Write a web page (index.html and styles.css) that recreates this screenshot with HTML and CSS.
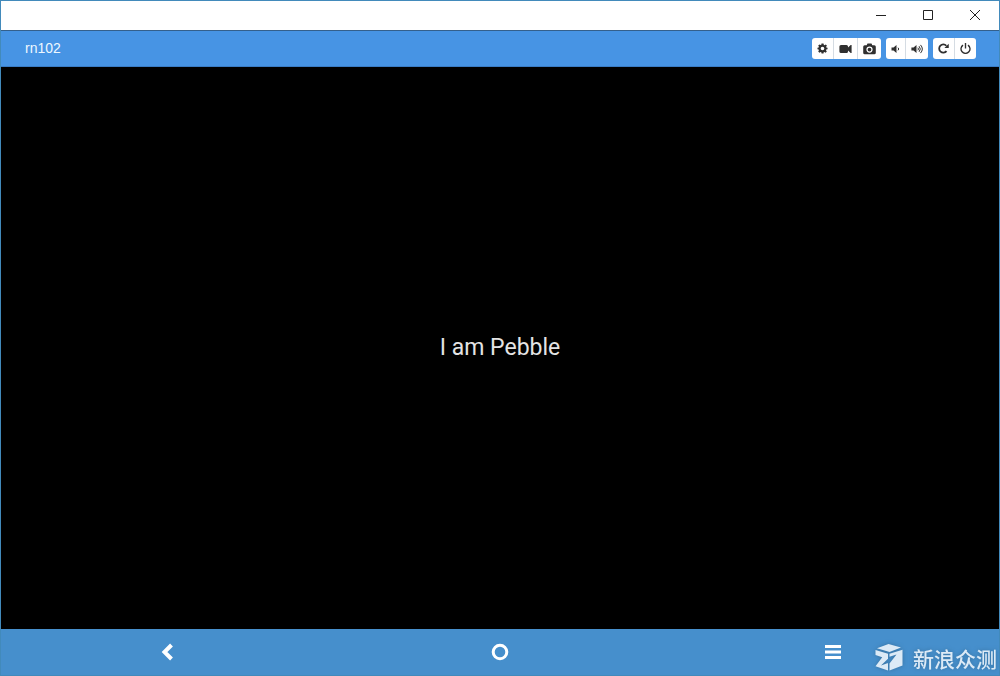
FILE: index.html
```html
<!DOCTYPE html>
<html lang="en">
<head>
<meta charset="utf-8">
<meta name="viewport" content="width=device-width, initial-scale=1">
<title>rn102</title>
<link rel="stylesheet" href="styles.css">
</head>
<body>
<div class="window">
  <header class="titlebar">
    <button class="caption" aria-label="Minimize"><svg width="12" height="12" viewBox="0 0 12 12"><path d="M1 6.500H11" /></svg></button>
    <button class="caption" aria-label="Maximize"><svg width="12" height="12" viewBox="0 0 12 12"><path d="M1.500 1.500H10.500V10.500H1.500Z" /></svg></button>
    <button class="caption" aria-label="Close"><svg width="12" height="12" viewBox="0 0 12 12"><path d="M1 1L11 11M11 1L1 11" /></svg></button>
  </header>
  <div class="toolbar">
    <h1 class="device">rn102</h1>
    <div class="tools">
      <div class="group">
        <button class="tool" aria-label="Settings"><svg width="11" height="11" viewBox="0 0 12 12"><path fill-rule="evenodd" d="M4.900 .5H7.100L7.400 2L8.300 2.400L9.600 1.500L10.900 2.900L9.900 4.100L10.200 5L11.500 5.200V6.900L10.100 7.200L9.800 8L10.700 9.300L9.400 10.600L8.100 9.800L7.300 10.100L7.100 11.500H5L4.700 10.100L3.900 9.800L2.700 10.600L1.300 9.300L2.100 8L1.800 7.200L.5 6.900V5.100L1.800 4.900L2.100 4L1.300 2.800L2.700 1.500L3.900 2.300L4.700 2ZM6 4A2 2 0 1 0 6 8A2 2 0 1 0 6 4Z"/></svg></button>
        <button class="tool" aria-label="Record video"><svg width="13" height="12" viewBox="0 0 13 12"><path d="M2 2H7.500Q9 2 9 3.500V4.600L11.700 2H12.600V10H11.700L9 7.400V8.500Q9 10 7.500 10H2Q.4 10 .4 8.500V3.500Q.4 2 2 2Z"/></svg></button>
        <button class="tool" aria-label="Take screenshot"><svg width="13" height="12" viewBox="0 0 13 12"><path fill-rule="evenodd" d="M4.500 .6H8.500L9.300 2.200H11.300Q12.800 2.200 12.800 3.700V9.700Q12.800 11.200 11.300 11.200H1.700Q.2 11.200 .2 9.700V3.700Q.2 2.200 1.700 2.200H3.700ZM6.500 3.500A3.100 3.100 0 1 0 6.500 9.700A3.100 3.100 0 1 0 6.500 3.500ZM6.500 4.700A1.900 1.900 0 1 1 6.500 8.500A1.900 1.900 0 1 1 6.500 4.700Z"/></svg></button>
      </div>
      <div class="group">
        <button class="tool" aria-label="Volume down"><svg width="9" height="12" viewBox="0 0 9 12"><path d="M.5 4.500H2.500L5.500 2V10L2.500 7.500H.5Z"/><path class="stroke thin" d="M7 4.700Q8.500 6 7 7.300"/></svg></button>
        <button class="tool" aria-label="Volume up"><svg width="12" height="12" viewBox="0 0 12 12"><path d="M.4 4.500H2.500L5.500 2V10L2.500 7.500H.4Z"/><path class="stroke thin" d="M6.900 4.700Q8 6 6.900 7.300M8.100 3.200Q10.500 6 8.100 8.800M9.500 1.900Q13.200 6 9.500 10.100"/></svg></button>
      </div>
      <div class="group">
        <button class="tool" aria-label="Rotate"><svg width="11" height="11" viewBox="0 0 12 12"><path class="stroke" d="M9.300 8.900A4.500 4.500 0 1 1 9.100 3"/><path d="M11.700 .7V5.400H7Z"/></svg></button>
        <button class="tool" aria-label="Power"><svg width="11" height="11" viewBox="0 0 12 12"><path class="stroke power" d="M3.300 2.300A4.900 4.900 0 1 0 8.700 2.300M6 0V6"/></svg></button>
      </div>
    </div>
  </div>
  <main class="screen"><p class="message">I am Pebble</p></main>
  <nav class="navbar" aria-label="Device navigation">
    <button class="nav" aria-label="Back"><svg width="18" height="18" viewBox="0 0 18 18"><path d="M13.500 2L6.500 9L13.500 16"/></svg></button>
    <button class="nav" aria-label="Home"><svg width="18" height="18" viewBox="0 0 18 18"><circle class="ring" cx="9" cy="9" r="6.800"/></svg></button>
    <button class="nav" aria-label="Menu"><svg width="18" height="18" viewBox="0 0 18 18"><path class="bars" d="M1 3.500H17M1 9H17M1 14.500H17"/></svg></button>
  </nav>
  <div class="watermark">
    <svg width="30" height="30" viewBox="0 0 30 30"><path fill-rule="evenodd" d="M3 5.200L14.500 1L27 4.600L15.500 9ZM1.500 7L14 10.800V27.500L1.500 23.300L8.200 14.200L1.500 12ZM15.500 10.800L28.500 6.800V22.500L15.500 27.500V20.500L22.500 11.500L15.500 13.700ZM14 15.800L7 22.500L14 20Z"/></svg>
    <span lang="zh-CN">新浪众测</span>
  </div>
</div>
</body>
</html>
```
FILE: styles.css
```css
* { box-sizing: border-box; }
body { margin: 0; font-family: "Liberation Sans", Arial, sans-serif; }
button { margin: 0; padding: 0; border: 0; background: none; display: flex; align-items: center; justify-content: center; }
svg { display: block; }
.window { position: relative; display: flex; flex-direction: column; min-height: 100vh; border: 1px solid #428abb; background: #000; }
.titlebar { display: flex; justify-content: flex-end; height: 29px; padding-right: 1px; background: #fff; }
.caption { width: 47px; height: 28px; }
.caption path { fill: none; stroke: #222; stroke-width: 1; }
.toolbar { display: flex; align-items: center; justify-content: space-between; height: 37px; padding: 0 23px 0 24px; border-top: 1px solid #34608c; border-bottom: 1px solid #397cc5; background: #4794e4; }
.device { margin: 0; padding-bottom: 2px; font-size: 14px; font-weight: 400; line-height: 20px; color: #eef8ff; }
.tools { display: flex; gap: 5px; }
.group { display: flex; overflow: hidden; border-radius: 3px; background: #fff; }
.tool { height: 21px; padding: 0 5px; }
.tool + .tool { border-left: 1px solid #d5dce3; }
.tool path { fill: #303030; }
.tool .stroke { fill: none; stroke: #303030; stroke-width: 2; }
.tool .thin { stroke-width: 1; }
.screen { flex: 1; display: flex; align-items: center; justify-content: center; background: #000; }
.message { margin: 0; font-family: Roboto, sans-serif; font-size: 23px; line-height: 32px; color: #e4e4e4; }
.navbar { display: grid; grid-template-columns: repeat(3, 1fr); height: 46px; background: #468fcc; }
.nav path, .ring { fill: none; stroke: #fff; stroke-width: 4; }
.nav .ring { stroke-width: 3; }
.nav .bars { stroke-width: 3; }
.tool .power { stroke-width: 1.5; }
.watermark { position: absolute; right: 2px; bottom: 2px; display: flex; align-items: center; gap: 9px; font-family: "Noto Sans CJK SC", sans-serif; font-size: 21px; font-weight: 500; line-height: 30px; color: #dceaf6; white-space: nowrap; pointer-events: none; filter: drop-shadow(0 0 2px #37719f); }
.watermark path { fill: #dceaf6; }
```
